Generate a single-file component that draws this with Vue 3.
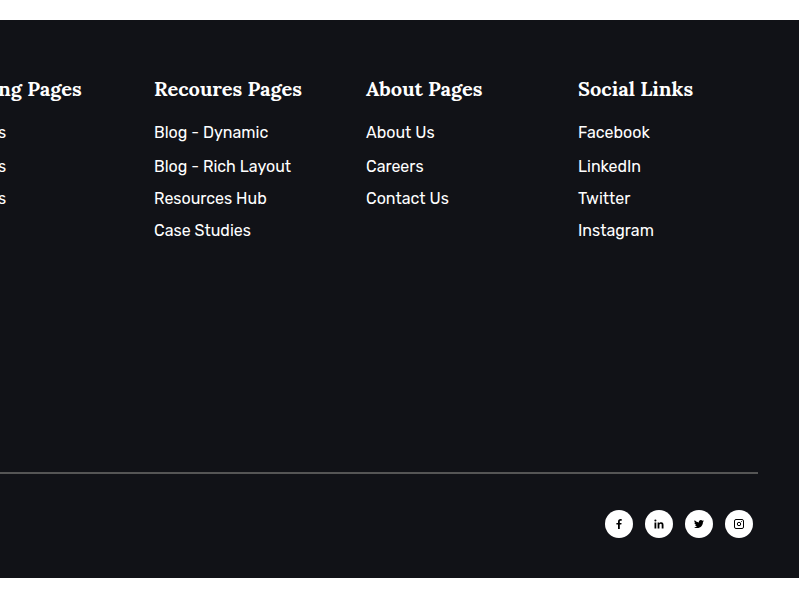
<template>
  <footer class="site-footer">
    <div class="footer-columns">
      <nav v-for="column in columns" :key="column.title" class="footer-column" :aria-label="column.title">
        <h2 class="column-title">{{ column.title }}</h2>
        <ul class="column-links">
          <li v-for="(link, index) in column.links" :key="index">
            <a href="#">{{ link }}</a>
          </li>
        </ul>
      </nav>
    </div>

    <hr class="divider" />

    <div class="social-row">
      <a v-for="item in socials" :key="item.name" href="#" class="social-link" :aria-label="item.name">
        <svg v-if="item.name === 'Instagram'" viewBox="0 0 10 10" class="social-icon">
          <rect x="0.5" y="0.5" width="9" height="9" rx="1.5" fill="none" stroke="#000" />
          <circle cx="5" cy="5" r="1.7" fill="none" stroke="#000" />
          <circle cx="7.6" cy="2.4" r="0.5" />
        </svg>
        <svg v-else :viewBox="item.viewBox" class="social-icon">
          <path :d="item.path" />
        </svg>
      </a>
    </div>
  </footer>
</template>

<script setup>
const columns = [
  { title: 'ng Pages', links: ['s', 's', 's'] },
  { title: 'Recoures Pages', links: ['Blog - Dynamic', 'Blog - Rich Layout', 'Resources Hub', 'Case Studies'] },
  { title: 'About Pages', links: ['About Us', 'Careers', 'Contact Us'] },
  { title: 'Social Links', links: ['Facebook', 'LinkedIn', 'Twitter', 'Instagram'] }
]

const socials = [
  {
    name: 'Facebook',
    viewBox: '0 0 10 10',
    path: 'M4 10V5.6H2.4V3.9H4V2.6C4 .9 5 0 6.5 0c.6 0 1 .1 1.2.1v1.6h-.9c-.8 0-1 .4-1 1v1.2h1.8l-.3 1.7H5.8V10z'
  },
  {
    name: 'LinkedIn',
    viewBox: '0 0 10 10',
    path: 'M.5 3.4h1.8V9.5H.5zM1.4.5a1 1 0 1 1 0 2.1 1 1 0 0 1 0-2.1zM3.6 3.4h1.7v.8c.3-.5.9-1 1.8-1 1.9 0 2.4 1.2 2.4 2.9v3.4H7.7v-3c0-.8 0-1.7-1-1.7s-1.3.8-1.3 1.6v3.1H3.6z'
  },
  {
    name: 'Twitter',
    viewBox: '0 2 24 20',
    path: 'M24 4.6a10 10 0 0 1-2.8.8 5 5 0 0 0 2.1-2.7c-1 .6-2 1-3.1 1.2a4.9 4.9 0 0 0-8.4 4.5A14 14 0 0 1 1.7 3.2a4.9 4.9 0 0 0 1.5 6.5c-.8 0-1.6-.2-2.2-.6v.1a4.9 4.9 0 0 0 3.9 4.8 5 5 0 0 1-2.2.1 4.9 4.9 0 0 0 4.6 3.4A9.9 9.9 0 0 1 0 19.5a14 14 0 0 0 7.5 2.2c9.1 0 14-7.5 14-14v-.6A10 10 0 0 0 24 4.6z'
  },
  { name: 'Instagram' }
]
</script>

<style scoped>
.site-footer { margin: 20px 0; padding: 55px 0 40px; overflow: hidden; background: #111217; color: #fff; font-family: Rubik, Roboto, sans-serif; }
.footer-columns { display: grid; grid-template-columns: minmax(0, 154fr) repeat(3, minmax(0, 212fr)); min-height: 397px; padding-right: 9px; }
.footer-column:first-child { margin-left: -2px; }
.column-title { margin: 0 0 18px; font-family: Lora, "Liberation Serif", serif; font-size: 20px; font-weight: 700; line-height: 28px; white-space: nowrap; }
.column-links { margin: 0; padding: 0; list-style: none; font-size: 16px; font-weight: 400; line-height: 24px; }
.column-links li { margin-bottom: 8px; white-space: nowrap; }
.column-links li:first-child { margin-bottom: 10px; }
.column-links a { color: #fff; text-decoration: none; }
.divider { height: 2px; margin: 0 41px 0 0; border: 0; background: #555; }
.social-row { display: flex; justify-content: flex-end; gap: 12px; margin-top: 36px; padding-right: 46px; }
.social-link { display: flex; align-items: center; justify-content: center; width: 28px; height: 28px; border-radius: 50%; background: #fff; }
.social-icon { display: block; width: 10px; height: 10px; fill: #000; }
</style>

<style>
body { margin: 0; background: #fff; }
</style>
